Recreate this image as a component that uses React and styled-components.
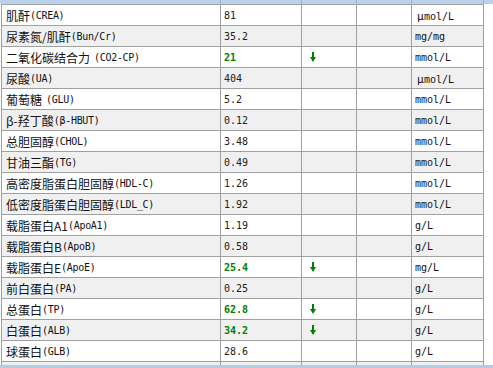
import React from 'react';
import styled, { createGlobalStyle } from 'styled-components';

const GlobalStyle = createGlobalStyle`
	html, body {
		margin: 0;
		padding: 0;
		background: #ffffff;
	}
	#root {
		width: 493px;
		height: 368px;
		overflow: hidden;
	}
`;

const columns = '219px 81px 55px 55px 72px';

const Page = styled.div`
	display: flex;
	flex-direction: column;
	width: 493px;
	height: 368px;
	overflow: hidden;
	background: #ffffff;
`;

const HeaderStrip = styled.div`
	display: grid;
	grid-template-columns: ${columns} 1fr;
	height: 4px;
	padding-left: 2px;
	background: #b9d1ea;
	flex: none;
`;

const HeaderCell = styled.div`
	border-right: 1px solid #9fb4cc;
	&:last-child {
		border-right: none;
	}
`;

const Body = styled.div`
	flex: 1;
	overflow: hidden;
	padding-left: 2px;
`;

const Table = styled.div`
	display: grid;
	grid-template-columns: ${columns};
	width: max-content;
	border-left: 1px solid #a0a0a0;
	border-top: 1px solid #a0a0a0;
	margin-left: -1px;
`;

const Cell = styled.div`
	height: 20px;
	display: flex;
	align-items: center;
	box-sizing: border-box;
	padding-left: ${p => p.$pad || 3}px;
	border-right: 1px solid #a0a0a0;
	border-bottom: 1px solid #a0a0a0;
	background: ${p => (p.$odd ? '#f0f0f0' : '#ffffff')};
	color: #000000;
	white-space: nowrap;
	overflow: hidden;
	height: 21px;
`;

const Cjk = styled.span`
	font-family: "Noto Sans CJK SC", sans-serif;
	font-size: 12px;
	color: #111111;
`;

const Code = styled.span`
	font-family: "DejaVu Sans Mono", "Liberation Mono", monospace;
	font-size: 10px;
	color: #111111;
	margin-left: ${p => (p.$gap ? 4 : 0)}px;
	letter-spacing: -0.3px;
`;

const Value = styled.span`
	font-family: "DejaVu Sans Mono", "Liberation Mono", monospace;
	font-size: 10px;
	font-weight: ${p => (p.$low ? 'bold' : 'normal')};
	color: ${p => (p.$low ? '#008000' : '#222222')};
`;

const Unit = styled.span`
	font-family: "DejaVu Sans Mono", "Liberation Mono", monospace;
	font-size: 10px;
	color: #111111;
`;

const Mu = styled.span`
	font-family: "Noto Sans CJK SC", sans-serif;
	font-size: 11px;
	margin-left: 2px;
`;

const BottomBar = styled.div`
	height: 3px;
	flex: none;
	background: #b4cbe6;
`;

const DownArrow = () => (
	<svg width="6" height="10" viewBox="0 0 6 10">
		<rect x="2" y="0" width="2" height="6" fill="#008000" />
		<polygon points="0,5 6,5 3,10" fill="#008000" />
	</svg>
);

const rows = [
	['肌酐', '(CREA)', false, '81', false, 'μ'],
	['尿素氮/肌酐', '(Bun/Cr)', false, '35.2', false, 'mg/mg'],
	['二氧化碳结合力', '(CO2-CP)', true, '21', true, 'mmol/L'],
	['尿酸', '(UA)', false, '404', false, 'μ'],
	['葡萄糖', '(GLU)', true, '5.2', false, 'mmol/L'],
	['β-羟丁酸', '(β-HBUT)', false, '0.12', false, 'mmol/L'],
	['总胆固醇', '(CHOL)', false, '3.48', false, 'mmol/L'],
	['甘油三酯', '(TG)', false, '0.49', false, 'mmol/L'],
	['高密度脂蛋白胆固醇', '(HDL-C)', false, '1.26', false, 'mmol/L'],
	['低密度脂蛋白胆固醇', '(LDL_C)', false, '1.92', false, 'mmol/L'],
	['载脂蛋白A1', '(ApoA1)', false, '1.19', false, 'g/L'],
	['载脂蛋白B', '(ApoB)', false, '0.58', false, 'g/L'],
	['载脂蛋白E', '(ApoE)', false, '25.4', true, 'mg/L'],
	['前白蛋白', '(PA)', false, '0.25', false, 'g/L'],
	['总蛋白', '(TP)', false, '62.8', true, 'g/L'],
	['白蛋白', '(ALB)', false, '34.2', true, 'g/L'],
	['球蛋白', '(GLB)', false, '28.6', false, 'g/L'],
	['', '', false, '', false, ''],
];

const App = () => (
	<Page>
		<GlobalStyle />
		<HeaderStrip>
			<HeaderCell />
			<HeaderCell />
			<HeaderCell />
			<HeaderCell />
			<HeaderCell />
			<HeaderCell />
		</HeaderStrip>
		<Body>
			<Table>
				{rows.map(([name, code, gap, value, low, unit], i) => {
					const odd = i % 2 === 1;
					return (
						<React.Fragment key={i}>
							<Cell $odd={odd} $pad={4}>
								<Cjk>{name}</Cjk>
								<Code $gap={gap}>{code}</Code>
							</Cell>
							<Cell $odd={odd}>
								<Value $low={low}>{value}</Value>
							</Cell>
							<Cell $odd={odd} $pad={8}>
								{low && <DownArrow />}
							</Cell>
							<Cell $odd={odd} />
							<Cell $odd={odd}>
								{unit === 'μ' ? (
									<Unit>
										<Mu>μ</Mu>mol/L
									</Unit>
								) : (
									<Unit>{unit}</Unit>
								)}
							</Cell>
						</React.Fragment>
					);
				})}
			</Table>
		</Body>
		<BottomBar />
	</Page>
);

export default App;
